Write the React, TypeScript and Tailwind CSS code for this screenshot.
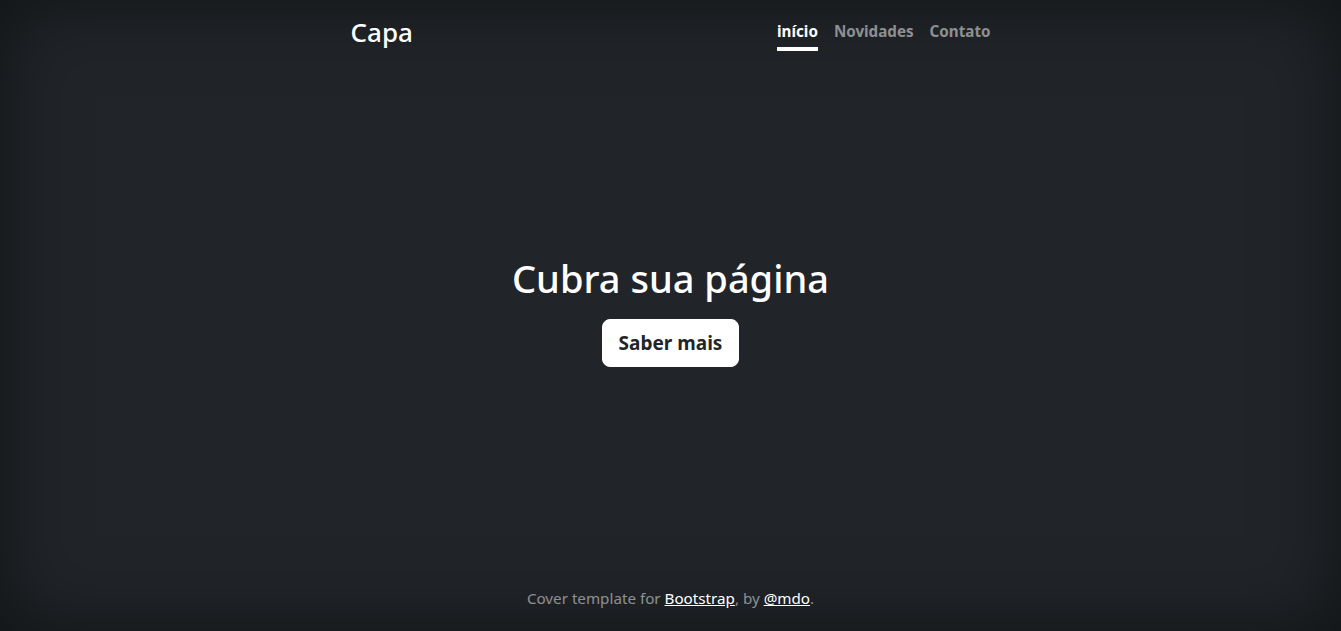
import React from "react";

export default function App() {
  return (
    <div
      className="h-screen w-full flex bg-[#212529] text-white shadow-[inset_0_0_5rem_rgba(0,0,0,0.5)] text-center"
      style={{ fontFamily: '"Noto Sans", "Open Sans", sans-serif' }}
    >
      <div className="w-full max-w-[672px] mx-auto p-4 flex flex-col h-full">
        <header className="mb-auto flex justify-between items-start">
          <h3 className="text-[26px] leading-[33.6px] font-medium m-0">Capa</h3>
          <nav className="flex text-[15.2px]">
            <a className="pt-[3px] pb-1 font-bold text-white border-b-4 border-white leading-6">início</a>
            <a className="ml-4 pt-[3px] pb-1 font-bold text-white/50 border-b-4 border-transparent leading-6">Novidades</a>
            <a className="ml-4 pt-[3px] pb-1 font-bold text-white/50 border-b-4 border-transparent leading-6">Contato</a>
          </nav>
        </header>

        <main className="px-4 flex flex-col items-center">
          <h1 className="text-[38px] leading-[48px] font-medium">Cubra sua página</h1>
          <a className="mt-[17px] mb-[17px] inline-block bg-white border border-white text-[#212529] font-bold px-4 py-2 rounded-lg text-[19px] leading-[30px]">
            Saber mais
          </a>
        </main>

        <footer className="mt-auto text-white/50">
          <p className="mb-[5px] leading-6 text-[15.2px]">
            Cover template for <a className="text-white underline">Bootstrap</a>, by{" "}
            <a className="text-white underline">@mdo</a>.
          </p>
        </footer>
      </div>
    </div>
  );
}
